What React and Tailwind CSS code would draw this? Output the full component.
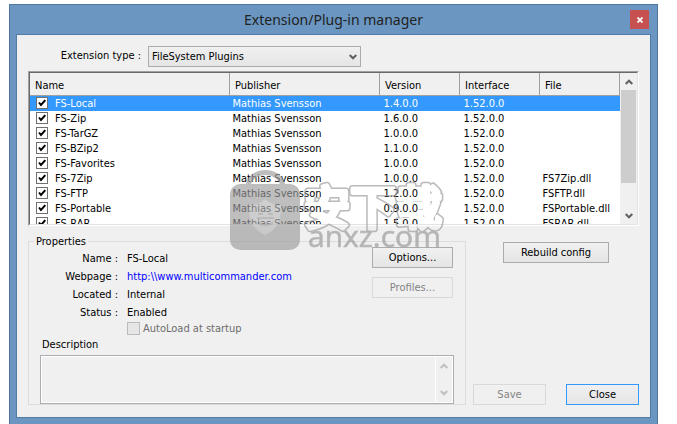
const COLUMNS = ["Name", "Publisher", "Version", "Interface", "File"];

const PLUGINS = [
  { name: "FS-Local", version: "1.4.0.0", file: "" },
  { name: "FS-Zip", version: "1.6.0.0", file: "" },
  { name: "FS-TarGZ", version: "1.0.0.0", file: "" },
  { name: "FS-BZip2", version: "1.1.0.0", file: "" },
  { name: "FS-Favorites", version: "1.0.0.0", file: "" },
  { name: "FS-7Zip", version: "1.0.0.0", file: "FS7Zip.dll" },
  { name: "FS-FTP", version: "1.2.0.0", file: "FSFTP.dll" },
  { name: "FS-Portable", version: "0.9.0.0", file: "FSPortable.dll" },
  { name: "FS-RAR", version: "1.5.0.0", file: "FSRAR.dll" },
];

function Arrow({ up, className = "" }) {
  return (
    <svg viewBox="0 0 8 6" className={`w-2 h-1.5 ${className}`} fill="none" stroke="currentColor" strokeWidth="2">
      <path d={up ? "M0.7 5 L4 1.7 L7.3 5" : "M0.7 1 L4 4.3 L7.3 1"} />
    </svg>
  );
}

function Button({ className = "", primary, ...props }) {
  const border = primary ? "border-[#3399ff]" : "border-[#acacac]";
  return (
    <button
      type="button"
      className={`h-[21px] border ${border} bg-linear-to-b from-[#f0f0f0] to-[#e5e5e5] text-center leading-[19px]
                  disabled:border-[#d9d9d9] disabled:bg-none disabled:text-[#838383] ${className}`}
      {...props}
    />
  );
}

function PluginTable() {
  return (
    <div className="mt-1 border border-t-[#a0a0a0] border-l-[#a0a0a0] border-r-white border-b-white">
      <div className="flex h-[153px] border border-t-[#696969] border-l-[#696969] border-r-[#e3e3e3] border-b-[#e3e3e3] bg-white">
        <div className="flex-1 overflow-hidden">
          <table className="w-full table-fixed border-collapse text-left">
            <colgroup>
              <col />
              <col className="w-[150px]" />
              <col className="w-20" />
              <col className="w-20" />
              <col className="w-20" />
            </colgroup>
            <thead>
              <tr className="h-[22px] bg-[#f0f0f0]">
                {COLUMNS.map((c) => (
                  <th key={c} className="border-r border-b border-[#a0a0a0] p-0 pt-1 pl-[5px] font-normal leading-4">{c}</th>
                ))}
              </tr>
            </thead>
            <tbody>
              {PLUGINS.map((p, i) => (
                <tr key={p.name} className={`h-[15px] leading-[15px] ${i === 0 ? "bg-[#3399ff] text-white" : ""}`}>
                  <td className="p-0 pl-1.5">
                    <label className="flex h-[15px] items-center gap-[7px]">
                      <Tick />
                      {p.name}
                    </label>
                  </td>
                  <td className="p-0 pl-[3px]">Mathias Svensson</td>
                  <td className="p-0 pl-1">{p.version}</td>
                  <td className="p-0 pl-1">1.52.0.0</td>
                  <td className="p-0 pl-[3px]">{p.file}</td>
                </tr>
              ))}
            </tbody>
          </table>
        </div>
        <div className="flex w-[17px] flex-col items-center bg-[#f0f0f0] text-[#606060]">
          <div className="flex h-[17px] items-center"><Arrow up /></div>
          <div className="h-[93px] w-[15px] bg-[#cdcdcd]" />
          <div className="mt-auto flex h-[17px] items-center"><Arrow /></div>
        </div>
      </div>
    </div>
  );
}

function Tick() {
  return (
    <span className="grid size-3 shrink-0">
      <input type="checkbox" defaultChecked
             className="peer col-start-1 row-start-1 size-3 appearance-none border border-[#707070] bg-white" />
      <svg viewBox="0 0 12 12" className="pointer-events-none invisible col-start-1 row-start-1 size-3 peer-checked:visible"
           fill="none" stroke="#000" strokeWidth="2">
        <path d="M3 5.5 L5 8 L9.3 3.2" />
      </svg>
    </span>
  );
}

function Field({ label, children }) {
  return (
    <div className="flex h-[18px] items-center gap-[9px]">
      <dt className="w-[89px] text-right">{label} :</dt>
      <dd>{children}</dd>
    </div>
  );
}

function Properties() {
  return (
    <fieldset className="w-[438px] min-w-0 border border-[#dcdcdc]">
      <legend className="ml-[5px] h-[11px] px-[2px] leading-3">Properties</legend>
      <div className="flex justify-between pr-3">
        <div className="pt-[3px]">
          <dl>
            <Field label="Name">FS-Local</Field>
            <Field label="Webpage">
              <a href="http://www.multicommander.com" className="text-[#0000ff]">http:\\www.multicommander.com</a>
            </Field>
            <Field label="Located">Internal</Field>
            <Field label="Status">Enabled</Field>
          </dl>
          <label className="ml-[98px] flex h-[13px] items-center gap-[3px] text-[#6d6d6d]">
            <input type="checkbox" disabled className="size-[13px] appearance-none border border-[#bcbcbc] bg-[#e6e6e6]" />
            AutoLoad at startup
          </label>
        </div>
        <div className="flex w-[81px] flex-col gap-[9px]">
          <Button>Options...</Button>
          <Button disabled>Profiles...</Button>
        </div>
      </div>
      <label htmlFor="description" className="mt-[3px] ml-[13px] block h-[17px] leading-[14px]">Description</label>
      <div className="mx-[11px] flex h-[49px] border border-[#abadb3] bg-white p-px">
        <textarea id="description" readOnly className="min-w-0 flex-1 resize-none bg-[#f0f0f0] outline-none" />
        <div className="flex w-[17px] flex-col items-center justify-between border-l border-white bg-[#f0f0f0] py-[6px] text-[#bfbfbf]">
          <Arrow up />
          <Arrow />
        </div>
      </div>
    </fieldset>
  );
}

function Watermark() {
  return (
    <svg viewBox="0 0 220 84" className="pointer-events-none absolute top-[169px] left-[229px] w-[220px] h-[84px]" aria-hidden="true">
      <defs>
        <mask id="outline" maskUnits="userSpaceOnUse" x="60" y="0" width="160" height="84">
          <text x="75" y="55" fontSize="46" fontWeight="500" fill="#fff" stroke="#fff" strokeWidth="7" strokeLinejoin="round"
                className="font-['Noto_Sans_CJK_SC',sans-serif]">安下载</text>
          <text x="75" y="55" fontSize="46" fontWeight="500" fill="#000" stroke="#000" strokeWidth="4" strokeLinejoin="round"
                className="font-['Noto_Sans_CJK_SC',sans-serif]">安下载</text>
        </mask>
      </defs>
      <g opacity="0.65">
        <path d="M19 17 C22 -1 51 -1 54 17" fill="none" stroke="#9c9c9c" strokeWidth="5" />
        <rect x="1" y="15" width="70" height="66" rx="10" fill="#9c9c9c" />
        <path d="M36 30 C42 35 47 36 52 36 C52 52 49 60 36 66 C23 60 20 52 20 36 C26 36 31 35 36 30Z" fill="#b5b5b5" />
        <path d="M29 45 h5 M39 45 h5 M28 49 h17 M29 53 C31 57 42 57 44 53" fill="none" stroke="#969696" strokeWidth="2" />
        <rect x="60" y="0" width="160" height="74" fill="#979797" mask="url(#outline)" />
        <text x="79" y="78" fontSize="30" fill="#979797" stroke="#979797" strokeWidth="0.6" className="font-['Open_Sans',sans-serif]">anxz.com</text>
      </g>
    </svg>
  );
}

export default function App() {
  return (
    <div className="overflow-hidden bg-white pt-1 pr-[19px] pl-[9px] font-['DejaVu_Sans_Condensed','Noto_Sans',sans-serif] text-[11px] leading-[14px] text-black">
      <main className="border border-b-0 border-[#4f789f] bg-[#6a96c1] px-1.5 pb-1.5">
        <header className="grid h-[29px] grid-cols-[1fr_auto_1fr] items-center">
          <h1 className="col-start-2 font-['Noto_Sans',sans-serif] text-[14px] text-[#222]">Extension/Plug-in manager</h1>
          <button type="button" aria-label="Close window"
                  className="mr-0.5 grid size-[19px] place-items-center justify-self-end bg-[#c75050] text-white">
            <svg viewBox="0 0 6 6" className="size-1.5" stroke="currentColor" strokeWidth="1.8"><path d="M0.5 0.5 L5.5 5.5 M5.5 0.5 L0.5 5.5" /></svg>
          </button>
        </header>
        <div className="border border-[#517ca6] bg-[#f0f0f0] px-[11px] pt-[11px] pb-3">
          <div className="flex items-start gap-[7px]">
            <label htmlFor="type" className="w-[113px] text-right leading-5">Extension type :</label>
            <div className="grid w-[213px] items-center">
              <select id="type" className="col-start-1 row-start-1 h-[21px] appearance-none border border-[#acacac] bg-linear-to-b from-[#f0f0f0] to-[#e5e5e5] pl-[3px]">
                <option>FileSystem Plugins</option>
              </select>
              <Arrow className="pointer-events-none col-start-1 row-start-1 mr-1 justify-self-end text-[#606060]" />
            </div>
          </div>
          <PluginTable />
          <div className="mt-2.5 flex">
            <Properties />
            <div className="ml-[7px] flex flex-1 flex-col justify-between pt-1.5">
              <Button className="ml-[30px] w-[106px]">Rebuild config</Button>
              <div className="flex justify-between">
                <Button disabled className="w-[73px]">Save</Button>
                <Button primary className="w-[73px]">Close</Button>
              </div>
            </div>
          </div>
        </div>
      </main>
      <Watermark />
    </div>
  );
}
